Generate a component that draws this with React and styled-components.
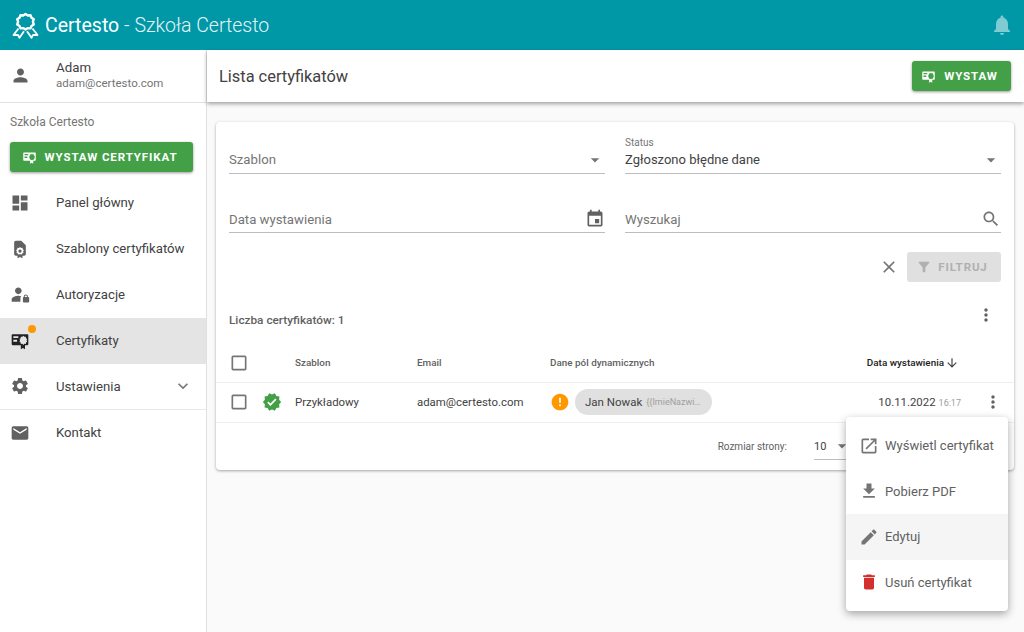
import styled, { createGlobalStyle } from "styled-components";

const GlobalStyle = createGlobalStyle`
  html, body {
    margin: 0;
    padding: 0;
    background: #fafafa;
  }
  * {
    box-sizing: border-box;
  }
`;

const paths = {
  person: "M12 12c2.21 0 4-1.79 4-4s-1.79-4-4-4-4 1.79-4 4 1.79 4 4 4zm0 2c-2.67 0-8 1.34-8 4v2h16v-2c0-2.66-5.33-4-8-4z",
  dashboard: "M3 13h8V3H3v10zm0 8h8v-6H3v6zm10 0h8V11h-8v10zm0-18v6h8V3h-8z",
  settings: "M19.14,12.94c0.04-0.3,0.06-0.61,0.06-0.94c0-0.32-0.02-0.64-0.07-0.94l2.03-1.58c0.18-0.14,0.23-0.41,0.12-0.61 l-1.92-3.32c-0.12-0.22-0.37-0.29-0.59-0.22l-2.39,0.96c-0.5-0.38-1.03-0.7-1.62-0.94L14.4,2.81c-0.04-0.24-0.24-0.41-0.48-0.41 h-3.84c-0.24,0-0.43,0.17-0.47,0.41L9.25,5.35C8.66,5.59,8.12,5.92,7.63,6.29L5.24,5.33c-0.22-0.08-0.47,0-0.59,0.22L2.74,8.87 C2.62,9.08,2.66,9.34,2.86,9.48l2.03,1.58C4.84,11.36,4.8,11.69,4.8,12s0.02,0.64,0.07,0.94l-2.03,1.58 c-0.18,0.14-0.23,0.41-0.12,0.61l1.92,3.32c0.12,0.22,0.37,0.29,0.59,0.22l2.39-0.96c0.5,0.38,1.03,0.7,1.62,0.94l0.36,2.54 c0.05,0.24,0.24,0.41,0.48,0.41h3.84c0.24,0,0.44-0.17,0.47-0.41l0.36-2.54c0.59-0.24,1.13-0.56,1.62-0.94l2.39,0.96 c0.22,0.08,0.47,0,0.59-0.22l1.92-3.32c0.12-0.22,0.07-0.47-0.12-0.61L19.14,12.94z M12,15.6c-1.98,0-3.6-1.62-3.6-3.6 s1.62-3.6,3.6-3.6s3.6,1.62,3.6,3.6S13.98,15.6,12,15.6z",
  mail: "M20 4H4c-1.1 0-1.99.9-1.99 2L2 18c0 1.1.9 2 2 2h16c1.1 0 2-.9 2-2V6c0-1.1-.9-2-2-2zm0 4l-8 5-8-5V6l8 5 8-5v2z",
  expand: "M16.59 8.59L12 13.17 7.41 8.59 6 10l6 6 6-6z",
  dropdown: "M7 10l5 5 5-5z",
  event: "M17 12h-5v5h5v-5zM16 1v2H8V1H6v2H5c-1.11 0-1.99.9-1.99 2L3 19c0 1.1.89 2 2 2h14c1.1 0 2-.9 2-2V5c0-1.1-.9-2-2-2h-1V1h-2zm3 18H5V8h14v11z",
  search: "M15.5 14h-.79l-.28-.27C15.41 12.59 16 11.11 16 9.5 16 5.91 13.09 3 9.5 3S3 5.91 3 9.5 5.91 16 9.5 16c1.61 0 3.09-.59 4.23-1.57l.27.28v.79l5 4.99L20.49 19l-4.99-5zm-6 0C7.01 14 5 11.99 5 9.5S7.01 5 9.5 5 14 7.01 14 9.5 11.99 14 9.5 14z",
  close: "M19 6.41L17.59 5 12 10.59 6.41 5 5 6.41 10.59 12 5 17.59 6.41 19 12 13.41 17.59 19 19 17.59 13.41 12z",
  filter: "M4.25 5.61C6.27 8.2 10 13 10 13v6c0 .55.45 1 1 1h2c.55 0 1-.45 1-1v-6s3.72-4.8 5.74-7.39c.51-.66.04-1.61-.79-1.61H5.04c-.83 0-1.3.95-.79 1.61z",
  more: "M12 8c1.1 0 2-.9 2-2s-.9-2-2-2-2 .9-2 2 .9 2 2 2zm0 2c-1.1 0-2 .9-2 2s.9 2 2 2 2-.9 2-2-.9-2-2-2zm0 6c-1.1 0-2 .9-2 2s.9 2 2 2 2-.9 2-2-.9-2-2-2z",
  checkbox: "M19 5v14H5V5h14m0-2H5c-1.1 0-2 .9-2 2v14c0 1.1.9 2 2 2h14c1.1 0 2-.9 2-2V5c0-1.1-.9-2-2-2z",
  verified: "M23 12l-2.44-2.79.34-3.69-3.61-.82-1.89-3.2L12 2.96 8.6 1.5 6.71 4.69 3.1 5.5l.34 3.7L1 12l2.44 2.79-.34 3.7 3.61.82L8.6 22.5l3.4-1.47 3.4 1.46 1.89-3.19 3.61-.82-.34-3.69L23 12zm-12.91 4.72l-3.8-3.81 1.48-1.48 2.32 2.33 5.85-5.87 1.48 1.48-7.33 7.35z",
  arrowDown: "M20 12l-1.41-1.41L13 16.17V4h-2v12.17l-5.58-5.59L4 12l8 8 8-8z",
  open: "M19 19H5V5h7V3H5c-1.11 0-2 .9-2 2v14c0 1.1.89 2 2 2h14c1.1 0 2-.9 2-2v-7h-2v7zM14 3v2h3.59l-9.83 9.83 1.41 1.41L19 6.41V10h2V3h-7z",
  download: "M19 9h-4V3H9v6H5l7 7 7-7zM5 18v2h14v-2H5z",
  edit: "M3 17.25V21h3.75L17.81 9.94l-3.75-3.75L3 17.25zM20.71 7.04c.39-.39.39-1.02 0-1.41l-2.34-2.34c-.39-.39-1.02-.39-1.41 0l-1.83 1.83 3.75 3.75 1.83-1.83z",
  trash: "M6 19c0 1.1.9 2 2 2h8c1.1 0 2-.9 2-2V7H6v12zM19 4h-3.5l-1-1h-5l-1 1H5v2h14V4z",
  bell: "M12 22c1.1 0 2-.9 2-2h-4c0 1.1.89 2 2 2zm6-6v-5c0-3.07-1.64-5.64-4.5-6.32V4c0-.83-.67-1.5-1.5-1.5s-1.5.67-1.5 1.5v.68C7.63 5.36 6 7.92 6 11v5l-2 2v1h16v-1l-2-2z",
  warning: "M12 2C6.48 2 2 6.48 2 12s4.48 10 10 10 10-4.48 10-10S17.52 2 12 2zm1 15h-2v-2h2v2zm0-4h-2V7h2v6z",
  template: "M13.500 2H7c-1.100 0-2 .9-2 2v14c0 1.100.9 2 2 2h2v3l3-1.500 3 1.500v-3h2c1.100 0 2-.9 2-2V7.500L13.500 2zM12 9.500l1.300 1.300 1.800-.2.200 1.800 1.400 1.100-1 1.500.5 1.700-1.700.7-.9 1.500-1.600-.8-1.600.8-.9-1.500-1.700-.7.500-1.700-1-1.500 1.400-1.100.2-1.800 1.800.2L12 9.500zM12 12.500a2 2 0 1 0 0 4 2 2 0 0 0 0-4z",
  personLock: "M10 11c2.210 0 4-1.790 4-4s-1.790-4-4-4-4 1.790-4 4 1.790 4 4 4zm1 2.050C10.670 13 10.340 13 10 13c-3 0-8 1.500-8 4.500V20h10.500v-4.500c0-1 .5-1.800 1-2.200-.8-.1-1.600-.2-2.500-.25zM21.500 14.500V14c0-1.400-1.100-2.500-2.500-2.500s-2.500 1.100-2.500 2.500v.5c-.6 0-1 .4-1 1V20c0 .6.4 1 1 1H22c.600 0 1-.4 1-1v-4.500c0-.6-.9-1-1.500-1zm-1.200 0h-2.600V14c0-.7.6-1.300 1.300-1.300s1.300.6 1.300 1.300v.5z",
  cert: "M3 4h18c.6 0 1 .4 1 1v11c0 .6-.4 1-1 1h-3v5l-2.500-1.500L13 22v-5H3c-.6 0-1-.4-1-1V5c0-.6.4-1 1-1zm1 2.200v2.300h6V6.200H4zm0 4.300v2.300h4.500v-2.300H4zm12-4.900l-1.200 1.400-1.800-.2-.2 1.800-1.500 1 .9 1.600-.9 1.600 1.500 1 .2 1.800 1.800-.2 1.200 1.400 1.200-1.400 1.800.2.200-1.800 1.500-1-.9-1.600.9-1.600-1.500-1-.2-1.800-1.800.2L16 5.600z",
};

const Svg = styled.svg`
  display: block;
  flex: none;
  width: ${(p) => p.$size || 24}px;
  height: ${(p) => p.$size || 24}px;
  fill: ${(p) => p.$color || "#616161"};
  fill-rule: evenodd;
`;

function Icon({ name, size, color }) {
  return (
    <Svg viewBox="0 0 24 24" $size={size} $color={color}>
      <path d={paths[name]} />
    </Svg>
  );
}

function Logo() {
  return (
    <svg width="27" height="27" viewBox="0 0 27 27" fill="none" stroke="#fff" strokeLinejoin="round">
      <path
        d="M13.500 2l2.300 1.500 2.700-.3 1 2.500 2.300 1.500-.9 2.600.9 2.600-2.300 1.500-1 2.500-2.700-.3-2.300 1.500-2.300-1.500-2.700.3-1-2.500-2.300-1.500.9-2.600-.9-2.600 2.300-1.500 1-2.500 2.700.3z"
        strokeWidth="2.400"
      />
      <path d="M6.500 16.500l-5 6.500 4.500-.2 1.500 3 4.500-6.500M20.500 16.500l5 6.500-4.500-.2-1.500 3-4.500-6.500" strokeWidth="1.800" />
    </svg>
  );
}

const Page = styled.div`
  position: relative;
  display: flex;
  flex-direction: column;
  width: 1024px;
  height: 632px;
  overflow: hidden;
  font-family: Roboto, "Liberation Sans", sans-serif;
  color: #424242;
`;

const TopBar = styled.header`
  flex: none;
  display: flex;
  align-items: center;
  justify-content: space-between;
  height: 50px;
  padding: 0 10px 0 12px;
  background: #0097a7;
  color: #fff;
`;

const Brand = styled.div`
  display: flex;
  align-items: center;
  gap: 6px;
  font-size: 19.500px;
`;

const BrandSub = styled.span`
  font-weight: 300;
  opacity: 0.9;
`;

const Body = styled.div`
  flex: 1;
  display: flex;
  min-height: 0;
`;

const Sidebar = styled.aside`
  flex: none;
  width: 207px;
  background: #fff;
  border-right: 1px solid #e0e0e0;
`;

const UserRow = styled.div`
  display: flex;
  align-items: center;
  height: 53px;
  padding: 0 0 2px 10px;
  border-bottom: 1px solid #e0e0e0;
`;

const IconSlot = styled.div`
  position: relative;
  flex: none;
  width: 46px;
  display: flex;
  align-items: center;
`;

const UserName = styled.div`
  font-size: 13.300px;
  line-height: 16px;
  color: #424242;
`;

const UserMail = styled.div`
  font-size: 11.500px;
  line-height: 14px;
  color: #757575;
`;

const SchoolLabel = styled.div`
  padding: 12px 10px 0;
  font-size: 12px;
  line-height: 14px;
  color: #757575;
`;

const PrimaryButton = styled.button`
  display: flex;
  align-items: center;
  justify-content: center;
  gap: 8px;
  height: 30px;
  width: ${(p) => p.$width}px;
  margin: ${(p) => p.$margin || 0};
  padding: 0 4px 0 0;
  border: 0;
  border-radius: 3px;
  background: #43a047;
  color: #fff;
  font: 700 11.500px Roboto, sans-serif;
  letter-spacing: 0.900px;
  box-shadow: 0 1px 3px rgba(0, 0, 0, 0.4);
`;

const NavItem = styled.div`
  display: flex;
  align-items: center;
  height: 46px;
  padding: 0 13px 1px 10px;
  font-size: 13.200px;
  color: #424242;
  background: ${(p) => (p.$active ? "#e4e4e4" : "transparent")};
  border-bottom: ${(p) => (p.$divider ? "1px solid #e8e8e8" : "0")};
`;

const NavLabel = styled.span`
  flex: 1;
`;

const Dot = styled.span`
  position: absolute;
  top: -6px;
  left: 18px;
  width: 8px;
  height: 8px;
  border-radius: 50%;
  background: #ff9800;
`;

const Main = styled.main`
  flex: 1;
  min-width: 0;
  display: flex;
  flex-direction: column;
`;

const SubHeader = styled.div`
  flex: none;
  display: flex;
  align-items: center;
  justify-content: space-between;
  height: 52px;
  padding: 0 13px 0 12px;
  background: #fff;
  box-shadow: 0 2px 4px rgba(0, 0, 0, 0.35);
`;

const PageTitle = styled.h1`
  margin: 0;
  font-size: 16.400px;
  font-weight: 400;
  color: #424242;
`;

const Content = styled.div`
  padding: 20px 10px 0 9px;
`;

const Card = styled.section`
  height: 348px;
  background: #fff;
  border-radius: 4px;
  box-shadow: 0 1px 3px rgba(0, 0, 0, 0.35);
`;

const Filters = styled.div`
  display: grid;
  grid-template-columns: 376px 376px;
  column-gap: 20px;
  row-gap: 8px;
  padding: 0 13px;
`;

const Field = styled.div`
  position: relative;
  display: flex;
  align-items: center;
  justify-content: space-between;
  height: ${(p) => p.$height}px;
  padding-top: 24px;
  border-bottom: 1px solid #bdbdbd;
  font-size: ${(p) => (p.$filled ? 13 : 13.2)}px;
  color: ${(p) => (p.$filled ? "#424242" : "#757575")};
`;

const FloatingLabel = styled.span`
  position: absolute;
  top: 15px;
  left: 0;
  font-size: 10px;
  line-height: 12px;
  color: #757575;
`;

const FilterActions = styled.div`
  display: flex;
  align-items: center;
  justify-content: flex-end;
  gap: 8px;
  height: 29px;
  margin-top: 19px;
  padding-right: 13px;
`;

const DisabledButton = styled(PrimaryButton)`
  gap: 6px;
  background: #e0e0e0;
  color: #b0b0b0;
  box-shadow: none;
`;

const CountRow = styled.div`
  display: flex;
  align-items: center;
  justify-content: space-between;
  height: 36px;
  margin-top: 16px;
  padding: 0 18px 0 13px;
  font-size: 11.800px;
  font-weight: 500;
  color: #616161;
`;

const CountLabel = styled.span`
  padding-top: 10px;
`;

const TableRow = styled.div`
  display: grid;
  grid-template-columns: 79px 122px 133px 1fr 130px 42px;
  align-items: center;
  height: ${(p) => p.$height}px;
  padding-top: ${(p) => p.$top || 0}px;
  padding-bottom: ${(p) => p.$bottom || 0}px;
  border-bottom: 1px solid #eeeeee;
`;

const Lead = styled.div`
  display: flex;
  align-items: center;
  gap: 13px;
  padding-left: 13px;
`;

const HeadCell = styled.div`
  display: flex;
  align-items: center;
  justify-content: ${(p) => (p.$end ? "flex-end" : "flex-start")};
  gap: 1px;
  padding-right: ${(p) => (p.$end ? 13 : 0)}px;
  font-size: 9.900px;
  font-weight: 500;
  color: ${(p) => (p.$end ? "#212121" : "#616161")};
`;

const Cell = styled.div`
  display: flex;
  align-items: center;
  gap: ${(p) => p.$gap || 0}px;
  font-size: 11.400px;
  color: #424242;
`;

const DateCell = styled(Cell)`
  justify-content: flex-end;
  align-items: baseline;
  padding-right: 11px;
`;

const Chip = styled.div`
  display: flex;
  align-items: center;
  gap: 4px;
  width: 137px;
  height: 26px;
  padding: 0 10px;
  border-radius: 13px;
  background: #e0e0e0;
  font-size: 11.500px;
  white-space: nowrap;
`;

const ChipHint = styled.span`
  font-size: 9px;
  color: #9e9e9e;
`;

const Time = styled.span`
  margin-left: 3px;
  font-size: 9px;
  color: #9e9e9e;
`;

const ActionCell = styled.div`
  display: flex;
  justify-content: center;
`;

const Pager = styled.div`
  display: flex;
  align-items: center;
  justify-content: flex-end;
  gap: 27px;
  height: 47px;
  padding-right: 154px;
  font-size: 10px;
  color: #616161;
`;

const PageSize = styled.div`
  display: flex;
  align-items: center;
  gap: 6px;
  width: 46px;
  height: 27px;
  border-bottom: 1px solid #bdbdbd;
  font-size: 11px;
  color: #424242;
`;

const Menu = styled.div`
  position: absolute;
  top: 417px;
  left: 846px;
  width: 162px;
  padding: 6px 0;
  background: #fff;
  border-radius: 4px;
  box-shadow: 0 3px 8px rgba(0, 0, 0, 0.35);
`;

const MenuItem = styled.div`
  display: flex;
  align-items: center;
  gap: 6px;
  height: 45.500px;
  padding-left: 13px;
  font-size: 13px;
  color: #616161;
  background: ${(p) => (p.$active ? "#f5f5f5" : "transparent")};
`;

const navItems = [
  { icon: "dashboard", label: "Panel główny" },
  { icon: "template", label: "Szablony certyfikatów" },
  { icon: "personLock", label: "Autoryzacje" },
  { icon: "cert", label: "Certyfikaty", active: true, dot: true },
  { icon: "settings", label: "Ustawienia", chevron: true, divider: true },
  { icon: "mail", label: "Kontakt" },
];

const menuItems = [
  { icon: "open", label: "Wyświetl certyfikat" },
  { icon: "download", label: "Pobierz PDF" },
  { icon: "edit", label: "Edytuj", active: true },
  { icon: "trash", label: "Usuń certyfikat", color: "#d32f2f" },
];

export default function App() {
  return (
    <Page>
      <GlobalStyle />
      <TopBar>
        <Brand>
          <Logo />
          <span>
            Certesto <BrandSub>- Szkoła Certesto</BrandSub>
          </span>
        </Brand>
        <Icon name="bell" color="#7fcbd3" />
      </TopBar>
      <Body>
        <Sidebar>
          <UserRow>
            <IconSlot>
              <Icon name="person" size={21} />
            </IconSlot>
            <div>
              <UserName>Adam</UserName>
              <UserMail>adam@certesto.com</UserMail>
            </div>
          </UserRow>
          <SchoolLabel>Szkoła Certesto</SchoolLabel>
          <PrimaryButton $width={183} $margin="13px 0 8px 10px">
            <Icon name="cert" size={15} color="#fff" />
            WYSTAW CERTYFIKAT
          </PrimaryButton>
          {navItems.map((item) => (
            <NavItem key={item.label} $active={item.active} $divider={item.divider}>
              <IconSlot>
                <Icon name={item.icon} size={20} color={item.active ? "#212121" : "#616161"} />
                {item.dot && <Dot />}
              </IconSlot>
              <NavLabel>{item.label}</NavLabel>
              {item.chevron && <Icon name="expand" size={20} color="#757575" />}
            </NavItem>
          ))}
        </Sidebar>
        <Main>
          <SubHeader>
            <PageTitle>Lista certyfikatów</PageTitle>
            <PrimaryButton $width={99}>
              <Icon name="cert" size={15} color="#fff" />
              WYSTAW
            </PrimaryButton>
          </SubHeader>
          <Content>
            <Card>
              <Filters>
                <Field $height={52}>
                  Szablon
                  <Icon name="dropdown" size={20} color="#757575" />
                </Field>
                <Field $height={52} $filled>
                  <FloatingLabel>Status</FloatingLabel>
                  Zgłoszono błędne dane
                  <Icon name="dropdown" size={20} color="#757575" />
                </Field>
                <Field $height={51}>
                  Data wystawienia
                  <Icon name="event" size={20} />
                </Field>
                <Field $height={51}>
                  Wyszukaj
                  <Icon name="search" size={20} color="#757575" />
                </Field>
              </Filters>
              <FilterActions>
                <Icon name="close" size={20} color="#757575" />
                <DisabledButton $width={94} as="div">
                  <Icon name="filter" size={16} color="#b0b0b0" />
                  FILTRUJ
                </DisabledButton>
              </FilterActions>
              <CountRow>
                <CountLabel>Liczba certyfikatów: 1</CountLabel>
                <Icon name="more" size={20} />
              </CountRow>
              <TableRow $height={50} $top={10}>
                <Lead>
                  <Icon name="checkbox" size={20} color="#757575" />
                </Lead>
                <HeadCell>Szablon</HeadCell>
                <HeadCell>Email</HeadCell>
                <HeadCell>Dane pól dynamicznych</HeadCell>
                <HeadCell $end>
                  Data wystawienia
                  <Icon name="arrowDown" size={14} color="#424242" />
                </HeadCell>
                <span />
              </TableRow>
              <TableRow $height={40} $bottom={1}>
                <Lead>
                  <Icon name="checkbox" size={20} color="#757575" />
                  <Icon name="verified" size={20} color="#43a047" />
                </Lead>
                <Cell>Przykładowy</Cell>
                <Cell>adam@certesto.com</Cell>
                <Cell $gap={5}>
                  <Icon name="warning" size={20} color="#ff9800" />
                  <Chip>
                    Jan Nowak <ChipHint>{"{{ImieNazwi…"}</ChipHint>
                  </Chip>
                </Cell>
                <DateCell>
                  10.11.2022
                  <Time>16:17</Time>
                </DateCell>
                <ActionCell>
                  <Icon name="more" size={20} />
                </ActionCell>
              </TableRow>
              <Pager>
                Rozmiar strony:
                <PageSize>
                  10
                  <Icon name="dropdown" size={20} color="#757575" />
                </PageSize>
              </Pager>
            </Card>
          </Content>
        </Main>
      </Body>
      <Menu>
        {menuItems.map((item) => (
          <MenuItem key={item.label} $active={item.active}>
            <Icon name={item.icon} size={20} color={item.color || "#757575"} />
            <span>{item.label}</span>
          </MenuItem>
        ))}
      </Menu>
    </Page>
  );
}
